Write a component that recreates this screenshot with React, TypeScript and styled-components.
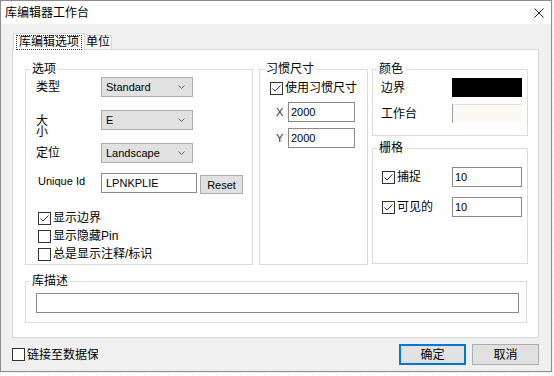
import React from 'react';
import styled, { createGlobalStyle } from 'styled-components';

const GlobalStyle = createGlobalStyle`
    html, body {
        margin: 0;
        padding: 0;
    }
    body {
        background-color: #fff;
        background-image: linear-gradient(#f1f1f1 1px, transparent 1px),
            linear-gradient(90deg, #f1f1f1 1px, transparent 1px);
        background-size: 12px 12px;
        font-family: 'Liberation Sans', 'Noto Sans CJK SC', sans-serif;
        font-size: 11px;
        color: #000;
    }
`;

const Check: React.FC = () => (
    <svg width="11" height="11" viewBox="0 0 11 11">
        <polyline points="1.5,5.5 4,8 9.5,2.5" fill="none" stroke="#333" strokeWidth="1" />
    </svg>
);

const Chevron: React.FC = () => (
    <svg width="7" height="4" viewBox="0 0 7 4">
        <polyline points="0.5,0.5 3.5,3.5 6.5,0.5" fill="none" stroke="#606060" strokeWidth="1" />
    </svg>
);

type CheckBoxProps = {
    checked?: boolean;
    children: React.ReactNode;
    width?: number;
};

const CheckBox: React.FC<CheckBoxProps> = ({ checked, children, width }) => (
    <CheckRow style={width ? { width } : undefined}>
        <Box>{checked && <Check />}</Box>
        <span>{children}</span>
    </CheckRow>
);

type SelectProps = { value: string };

const Select: React.FC<SelectProps> = ({ value }) => (
    <SelectBox>
        <span>{value}</span>
        <Chevron />
    </SelectBox>
);

const App: React.FC = () => (
    <>
        <GlobalStyle />
        <Window>
            <TitleBar>
                <span>库编辑器工作台</span>
                <svg width="10" height="10" viewBox="0 0 10 10">
                    <path d="M0.5 0.5 L9.5 9.5 M9.5 0.5 L0.5 9.5" stroke="#222" strokeWidth="1" />
                </svg>
            </TitleBar>
            <Body>
                <TabStrip>
                    <Tab $active>
                        <FocusText>库编辑选项</FocusText>
                    </Tab>
                    <Tab>单位</Tab>
                </TabStrip>
                <Panel>
                    <TopRow>
                        <Group $w={228} $h={203} $mr={6}>
                            <GroupLabel>选项</GroupLabel>
                            <OptionsBody>
                                <FieldGrid>
                                    <FieldLabel>类型</FieldLabel>
                                    <Select value="Standard" />
                                    <FieldLabel $narrow>大小</FieldLabel>
                                    <Select value="E" />
                                    <FieldLabel>定位</FieldLabel>
                                    <Select value="Landscape" />
                                </FieldGrid>
                                <UniqueRow>
                                    <UniqueLabel>Unique Id</UniqueLabel>
                                    <UniqueInput defaultValue="LPNKPLIE" />
                                    <ResetButton>Reset</ResetButton>
                                </UniqueRow>
                                <CheckList>
                                    <CheckBox checked>显示边界</CheckBox>
                                    <CheckBox>显示隐藏Pin</CheckBox>
                                    <CheckBox>总是显示注释/标识</CheckBox>
                                </CheckList>
                            </OptionsBody>
                        </Group>
                        <Group $w={109} $h={203} $mr={4}>
                            <GroupLabel>习惯尺寸</GroupLabel>
                            <CustomBody>
                                <CheckBox checked>使用习惯尺寸</CheckBox>
                                <AxisRow>
                                    <AxisLabel>X</AxisLabel>
                                    <TextBox $w={67} defaultValue="2000" />
                                </AxisRow>
                                <AxisRow>
                                    <AxisLabel>Y</AxisLabel>
                                    <TextBox $w={67} defaultValue="2000" />
                                </AxisRow>
                            </CustomBody>
                        </Group>
                        <RightColumn>
                            <Group $w={156} $h={74}>
                                <GroupLabel>颜色</GroupLabel>
                                <ColorBody>
                                    <ColorRow>
                                        <ColorLabel>边界</ColorLabel>
                                        <Swatch $color="#000" />
                                    </ColorRow>
                                    <ColorRow>
                                        <ColorLabel>工作台</ColorLabel>
                                        <Swatch $color="#fcf8f4" $sunken />
                                    </ColorRow>
                                </ColorBody>
                            </Group>
                            <Group $w={156} $h={123}>
                                <GroupLabel>栅格</GroupLabel>
                                <GridBody>
                                    <GridRow>
                                        <CheckBox checked width={70}>
                                            捕捉
                                        </CheckBox>
                                        <TextBox $w={70} defaultValue="10" />
                                    </GridRow>
                                    <GridRow>
                                        <CheckBox checked width={70}>
                                            可见的
                                        </CheckBox>
                                        <TextBox $w={70} defaultValue="10" />
                                    </GridRow>
                                </GridBody>
                            </Group>
                        </RightColumn>
                    </TopRow>
                    <DescGroup $w={502} $h={49}>
                        <GroupLabel>库描述</GroupLabel>
                        <DescBody>
                            <TextBox $w={483} defaultValue="" />
                        </DescBody>
                    </DescGroup>
                </Panel>
                <Footer>
                    <ClippedCheck>
                        <CheckBox>链接至数据保护</CheckBox>
                    </ClippedCheck>
                    <PushButton $primary>确定</PushButton>
                    <PushButton>取消</PushButton>
                </Footer>
            </Body>
        </Window>
    </>
);

const Window = styled.div`
    box-sizing: border-box;
    width: 552px;
    height: 372px;
    border: 1px solid #8c8c8c;
    background-color: #f0f0f0;
    display: flex;
    flex-direction: column;
`;

const TitleBar = styled.div`
    height: 23px;
    flex-shrink: 0;
    background-color: #fff;
    display: flex;
    align-items: center;
    justify-content: space-between;
    padding: 0 7px 0 4px;
    font-size: 12px;
    line-height: 14px;
`;

const Body = styled.div`
    display: flex;
    flex-direction: column;
    padding: 9px 12px 0 11px;
`;

const TabStrip = styled.div`
    display: flex;
    align-items: flex-end;
    height: 16px;
    padding-left: 1px;
    position: relative;
    z-index: 1;
`;

const Tab = styled.div<{ $active?: boolean }>`
    box-sizing: border-box;
    display: flex;
    align-items: center;
    height: ${(p) => (p.$active ? 17 : 14)}px;
    margin-bottom: ${(p) => (p.$active ? -1 : 0)}px;
    padding: 0 ${(p) => (p.$active ? 2 : 1)}px;
    background-color: ${(p) => (p.$active ? '#fff' : '#f7f7f7')};
    border: 1px solid #d9d9d9;
    border-bottom: none;
    border-left-width: ${(p) => (p.$active ? 1 : 0)}px;
    font-size: 12px;
    line-height: 13px;
`;

const FocusText = styled.span`
    border: 1px dotted #333;
    padding: 0 2px;
    line-height: 13px;
`;

const Panel = styled.div`
    box-sizing: border-box;
    height: 289px;
    border: 1px solid #d9d9d9;
    background-color: #fff;
    padding: 12px 10px 0 12px;
`;

const TopRow = styled.div`
    display: flex;
    align-items: flex-start;
`;

const Group = styled.fieldset<{ $w: number; $h: number; $mr?: number }>`
    box-sizing: border-box;
    margin: 0 ${(p) => p.$mr ?? 0}px 0 0;
    padding: 0;
    min-width: 0;
    width: ${(p) => p.$w}px;
    height: ${(p) => p.$h}px;
    border: 1px solid #dcdcdc;
`;

const GroupLabel = styled.legend`
    margin-left: 4px;
    padding: 0 2px;
    font-size: 12px;
    line-height: 14px;
`;

const OptionsBody = styled.div`
    padding: 1px 0 0 10px;
`;

const FieldGrid = styled.div`
    display: grid;
    grid-template-columns: 65px 92px;
    grid-auto-rows: 20px;
    row-gap: 13px;
    align-items: center;
`;

const FieldLabel = styled.span<{ $narrow?: boolean }>`
    width: ${(p) => (p.$narrow ? '13px' : 'auto')};
    font-size: 12px;
    line-height: ${(p) => (p.$narrow ? 11 : 14)}px;
    align-self: ${(p) => (p.$narrow ? 'start' : 'center')};
    margin-top: ${(p) => (p.$narrow ? 6 : 0)}px;
`;

const SelectBox = styled.div`
    box-sizing: border-box;
    height: 20px;
    display: flex;
    align-items: center;
    justify-content: space-between;
    padding: 0 7px 0 4px;
    background-color: #e1e1e1;
    border: 1px solid #adadad;
    line-height: 14px;
`;

const UniqueRow = styled.div`
    display: flex;
    align-items: flex-start;
    margin-top: 10px;
    padding-left: 2px;
`;

const UniqueLabel = styled.span`
    width: 63px;
    line-height: 16px;
`;

const TextBox = styled.input<{ $w: number }>`
    box-sizing: border-box;
    width: ${(p) => p.$w}px;
    height: 20px;
    margin: 0;
    padding: 0 2px;
    border: 1px solid #8a8a8a;
    background-color: #fff;
    font: inherit;
    font-size: 11px;
    color: #000;
    outline: none;
`;

const UniqueInput = styled(TextBox).attrs({ $w: 96 })`
    padding-left: 4px;
`;

const ResetButton = styled.button`
    box-sizing: border-box;
    width: 43px;
    height: 19px;
    margin: 2px 0 0 3px;
    padding: 0;
    background-color: #e1e1e1;
    border: 1px solid #adadad;
    font: inherit;
    font-size: 11px;
    line-height: 14px;
    color: #000;
`;

const CheckList = styled.div`
    display: flex;
    flex-direction: column;
    margin-top: 15px;
    padding-left: 2px;
    font-size: 12px;
`;

const CheckRow = styled.label`
    display: flex;
    align-items: center;
    gap: 2px;
    height: 18px;
    line-height: 14px;
    white-space: nowrap;
`;

const Box = styled.span`
    box-sizing: border-box;
    width: 13px;
    height: 13px;
    flex-shrink: 0;
    border: 1px solid #333;
    background-color: #fff;
    display: flex;
`;

const CustomBody = styled.div`
    padding: 3px 0 0 10px;
    font-size: 12px;
`;

const AxisRow = styled.div`
    display: flex;
    align-items: center;
    margin-top: 5px;
    padding-left: 6px;

    & + & {
        margin-top: 6px;
    }
`;

const AxisLabel = styled.span`
    width: 12px;
    color: #333;
    font-size: 11px;
    line-height: 14px;
`;

const RightColumn = styled.div`
    display: flex;
    flex-direction: column;
    gap: 5px;
`;

const ColorBody = styled.div`
    display: flex;
    flex-direction: column;
    gap: 7px;
    padding: 2px 0 0 8px;
    font-size: 12px;
`;

const ColorRow = styled.div`
    display: flex;
    align-items: center;
`;

const ColorLabel = styled.span`
    width: 71px;
    line-height: 14px;
`;

const Swatch = styled.div<{ $color: string; $sunken?: boolean }>`
    box-sizing: border-box;
    width: 70px;
    height: 19px;
    background-color: ${(p) => p.$color};
    border-top: ${(p) => (p.$sunken ? '1px solid #e0e0e0' : 'none')};
    border-left: ${(p) => (p.$sunken ? '1px solid #a0a0a0' : 'none')};
`;

const GridBody = styled.div`
    display: flex;
    flex-direction: column;
    gap: 10px;
    padding: 12px 0 0 9px;
    font-size: 12px;
`;

const GridRow = styled.div`
    display: flex;
    align-items: center;
`;

const DescGroup = styled(Group)`
    margin-top: 9px;
`;

const DescBody = styled.div`
    padding: 5px 0 0 10px;
`;

const Footer = styled.div`
    display: flex;
    align-items: center;
    gap: 6px;
    height: 21px;
    margin-top: 6px;
    font-size: 12px;
`;

const ClippedCheck = styled.div`
    width: 86px;
    overflow: hidden;
    margin-right: auto;
`;

const PushButton = styled.button<{ $primary?: boolean }>`
    box-sizing: border-box;
    width: 67px;
    height: 21px;
    margin: 0;
    padding: 0;
    background-color: #e1e1e1;
    border: ${(p) => (p.$primary ? '2px solid #0078d7' : '1px solid #adadad')};
    font: inherit;
    font-size: 12px;
    line-height: 14px;
    color: #000;
`;

export default App;
